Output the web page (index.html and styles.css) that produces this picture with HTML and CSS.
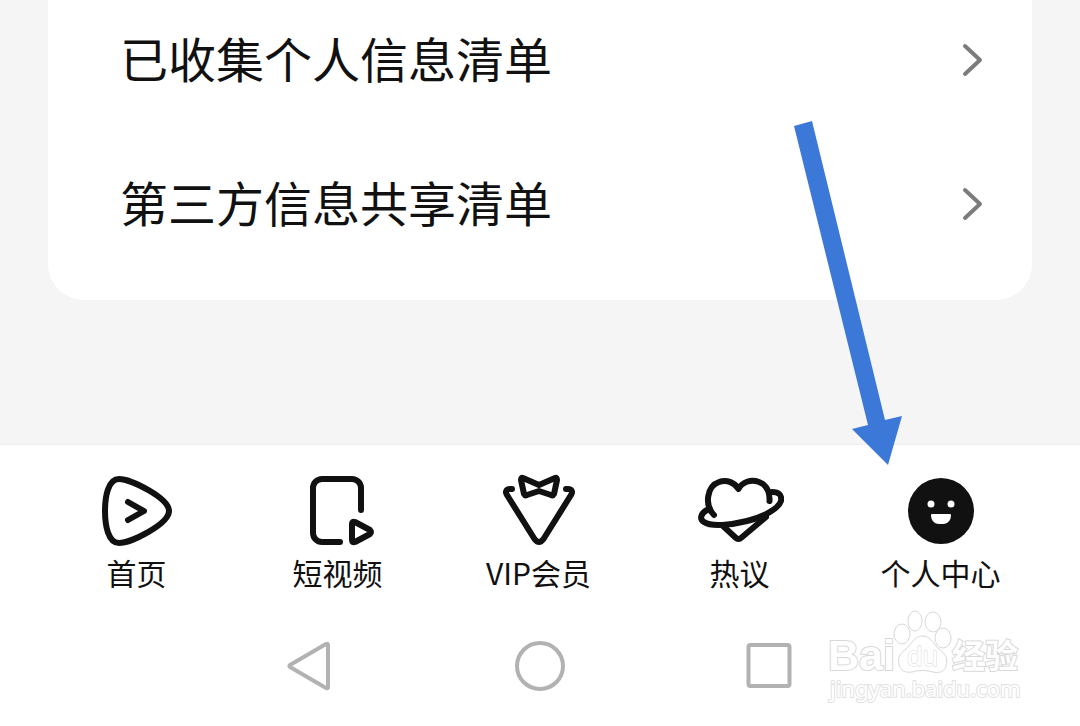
FILE: index.html
```
<!DOCTYPE html>
<html lang="zh">
<head>
    <meta charset="UTF-8">
    <meta name="viewport" content="width=device-width, initial-scale=1.0">
    <title>个人中心</title>
    <link rel="stylesheet" href="styles.css">
</head>
<body>
    <div class="page">
        <main class="content">
            <div class="card">
                <a class="row" href="#">
                    <span>已收集个人信息清单</span>
                    <svg class="chevron" viewBox="0 0 24 36"><path d="M5 4l15 14L5 32"/></svg>
                </a>
                <a class="row" href="#">
                    <span>第三方信息共享清单</span>
                    <svg class="chevron" viewBox="0 0 24 36"><path d="M5 4l15 14L5 32"/></svg>
                </a>
            </div>
        </main>

        <nav class="tab-bar">
            <a class="tab" href="#">
                <svg class="tab-icon" viewBox="0 0 88 88">
                    <path d="M26 12C38 12 76 31 76 44S38 76 26 76C15 76 12 58 12 44S15 12 26 12Z"/>
                    <path d="M35 35l16 9-16 9"/>
                </svg>
                <span>首页</span>
            </a>
            <a class="tab" href="#">
                <svg class="tab-icon" viewBox="0 0 88 88">
                    <path d="M67 43V21a9 9 0 0 0-9-9H28a9 9 0 0 0-9 9v45a9 9 0 0 0 9 9h18"/>
                    <path d="M58 57q0-3 3-2l15 8q2 2 0 4l-15 8q-3 1-3-2z"/>
                </svg>
                <span>短视频</span>
            </a>
            <a class="tab" href="#">
                <svg class="tab-icon" viewBox="0 0 88 88">
                    <path d="M17 22h-2c-4 0-5 3-3 6l27.500 44q4.500 6 9 0L76 28c2-3 1-6-3-6h-2"/>
                    <path d="M28 11l16 7 16-7q2-1 2 2l-3 14q-1 2-3 1l-12-4-12 4q-2 1-3-1l-3-14q0-3 2-2z"/>
                </svg>
                <span>VIP会员</span>
            </a>
            <a class="tab" href="#">
                <svg class="tab-icon" viewBox="0 0 88 88">
                    <path d="M18 48C8 38 11 19 23 15c8-3 16 1 19.500 7C46 15 55 12 63 15c8 3 11 11 10.500 19"/>
                    <path d="M11 43C5 46 3 52 8 55c7 5 27 3 43-1 17-4 32-13 34-20 1-6-2-9-9-9"/>
                    <path d="M27 59l13 12q3 2 5 0l25-21"/>
                </svg>
                <span>热议</span>
            </a>
            <a class="tab" href="#">
                <svg class="tab-icon" viewBox="0 0 88 88">
                    <circle class="face" cx="44" cy="44" r="33"/>
                    <circle class="hole" cx="34" cy="37" r="3.500"/>
                    <circle class="hole" cx="54" cy="37" r="3.500"/>
                    <path class="hole" d="M35 47h18q1 0 1 1c0 6-4 9-8 9h-4c-4 0-8-3-8-9q0-1 1-1z"/>
                </svg>
                <span>个人中心</span>
            </a>
        </nav>

        <div class="system-bar">
            <button class="key" type="button" aria-label="返回">
                <svg viewBox="0 0 60 60"><path d="M10 29L46 8q2-1 2 1v42q0 2-2 1L10 31q-1-1 0-2z"/></svg>
            </button>
            <button class="key" type="button" aria-label="主页">
                <svg viewBox="0 0 60 60"><circle cx="30" cy="30" r="23"/></svg>
            </button>
            <button class="key" type="button" aria-label="最近任务">
                <svg viewBox="0 0 60 60"><rect x="8.500" y="9" width="41" height="41" rx="2"/></svg>
            </button>
        </div>

        <!-- 指示箭头 -->
        <svg class="arrow" viewBox="0 0 110 345">
            <path d="M4 5l18-5 73 299 17-4-14 49-36-36 16-4z"/>
        </svg>

        <!-- 水印 -->
        <svg class="watermark" viewBox="0 0 210 100">
            <text class="brand" x="8" y="65">Bai</text>
            <ellipse cx="82" cy="29" rx="8" ry="10"/>
            <ellipse cx="95" cy="16" rx="7" ry="10"/>
            <ellipse cx="113" cy="17" rx="8" ry="10"/>
            <ellipse cx="123" cy="33" rx="8" ry="10"/>
            <path d="M102 31c9 0 11 8 17 13 7 5 9 10 7 17-2 7-8 7-13 6-7-2-14-2-21 0-6 1-12-1-13-8-2-7 2-11 8-16 5-5 8-12 15-12z"/>
            <text class="du" x="87" y="61">du</text>
            <text class="cn" x="132" y="63">经验</text>
            <text class="site" x="10" y="92">jingyan.baidu.com</text>
        </svg>
    </div>
</body>
</html>
```
FILE: styles.css
```
body {
    margin: 0;
    background: #fff;
    color: #111;
    font-family: "Noto Sans CJK SC", sans-serif;
}

a {
    color: inherit;
    text-decoration: none;
}

.page {
    position: relative;
    min-height: 100vh;
    overflow: hidden;
}

.content {
    padding: 0 48px 144px;
    background: #f5f5f5;
}

.card {
    display: flex;
    flex-direction: column;
    gap: 72px;
    padding: 24px 48px 60px 72px;
    border-radius: 0 0 36px 36px;
    background: #fff;
}

.row {
    display: flex;
    justify-content: space-between;
    min-height: 72px;
    font-size: 48px;
    line-height: 66px;
}

.chevron {
    align-self: center;
    width: 24px;
    height: 36px;
    fill: none;
    stroke: #7c7c7c;
    stroke-width: 4;
    stroke-linecap: round;
    stroke-linejoin: round;
}

/* 底部导航 */
.tab-bar {
    display: flex;
    padding: 22px 39px 0 36px;
    border-top: 1px solid #eee;
    background: #fff;
}

.tab {
    flex: 1;
    display: flex;
    flex-direction: column;
    align-items: center;
    font-size: 30px;
    line-height: 34px;
}

.tab-icon {
    width: 88px;
    height: 88px;
    fill: none;
    stroke: #111;
    stroke-width: 6;
    stroke-linecap: round;
    stroke-linejoin: round;
}

.tab-icon .face {
    fill: #111;
    stroke: none;
}

.tab-icon .hole {
    fill: #fff;
    stroke: none;
}

/* 系统按键 */
.system-bar {
    display: flex;
    justify-content: center;
    gap: 170px;
    padding: 47px 0 30px;
}

.key {
    width: 60px;
    height: 60px;
    padding: 0;
    border: none;
    background: none;
    cursor: pointer;
}

.key svg {
    display: block;
    fill: none;
    stroke: #b2b2b2;
    stroke-width: 4;
    stroke-linejoin: round;
}

.arrow {
    position: absolute;
    top: 121px;
    right: 180px;
    width: 110px;
    height: 345px;
    overflow: visible;
    fill: #3b78d8;
    pointer-events: none;
}

.watermark {
    position: absolute;
    top: 605px;
    right: 50px;
    width: 210px;
    height: 100px;
    fill: #fff;
    stroke: #d8d8d8;
    stroke-width: 1;
    pointer-events: none;
}

.watermark text {
    font-family: "Liberation Sans", sans-serif;
    stroke-width: 2;
    paint-order: stroke;
}

.watermark .brand {
    font-size: 43px;
    font-weight: bold;
}

.watermark .du {
    font-size: 28px;
    stroke-width: 1;
}

.watermark .cn {
    font-family: "Noto Sans CJK SC", sans-serif;
    font-size: 33px;
    font-weight: bold;
}

.watermark .site {
    font-family: "Noto Sans", sans-serif;
    font-size: 22px;
    stroke: #e2e2e2;
}
```
